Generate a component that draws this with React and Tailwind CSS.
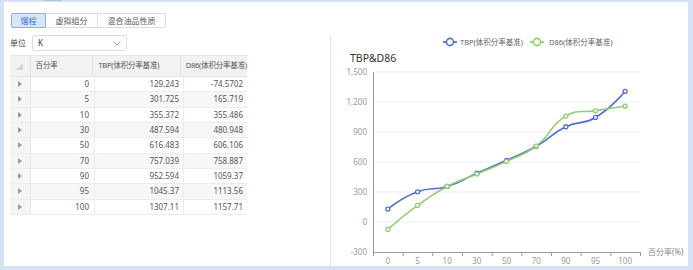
import React from "react";

const rows = [
  ["0", "129.243", "-74.5702"],
  ["5", "301.725", "165.719"],
  ["10", "355.372", "355.486"],
  ["30", "487.594", "480.948"],
  ["50", "616.483", "606.106"],
  ["70", "757.039", "758.887"],
  ["90", "952.594", "1059.37"],
  ["95", "1045.37", "1113.56"],
  ["100", "1307.11", "1157.71"],
];

const cats = ["0", "5", "10", "30", "50", "70", "90", "95", "100"];
const TBP = rows.map((r) => parseFloat(r[1]));
const D86 = rows.map((r) => parseFloat(r[2]));

const X0 = 373;
const X1 = 640;
const BW = (X1 - X0) / 9;
const xs = (i) => X0 + BW * (i + 0.5);
const ys = (v) => 222 - v / 10;

function smoothPath(vals) {
  const pts = vals.map((v, i) => [xs(i), ys(v)]);
  const s = 0.5;
  const cps = pts.map((p, i) => {
    if (i === 0 || i === pts.length - 1) return [p, p];
    const prev = pts[i - 1];
    const next = pts[i + 1];
    const vx = next[0] - prev[0];
    const vy = next[1] - prev[1];
    const d0 = Math.hypot(p[0] - prev[0], p[1] - prev[1]);
    const d1 = Math.hypot(next[0] - p[0], next[1] - p[1]);
    const sum = d0 + d1;
    const r0 = d0 / sum;
    const r1 = d1 / sum;
    return [
      [p[0] - vx * s * r0, p[1] - vy * s * r0],
      [p[0] + vx * s * r1, p[1] + vy * s * r1],
    ];
  });
  let d = `M${pts[0][0]},${pts[0][1]}`;
  for (let i = 1; i < pts.length; i++) {
    const c1 = cps[i - 1][1];
    const c2 = cps[i][0];
    d += ` C${c1[0]},${c1[1]} ${c2[0]},${c2[1]} ${pts[i][0]},${pts[i][1]}`;
  }
  return d;
}

const FONT = "'Noto Sans', 'Noto Sans CJK SC', sans-serif";

function Chart() {
  const yTicks = [1500, 1200, 900, 600, 300, 0, -300];
  const fmt = (v) => (Math.abs(v) >= 1000 ? v.toLocaleString("en-US") : String(v));
  return (
    <svg width="357" height="231" className="block" style={{ fontFamily: FONT }}>
      <g transform="translate(-331,-35)">
        {/* legend */}
        <line x1="443" y1="42" x2="457" y2="42" stroke="#5470c6" strokeWidth="1.8" />
        <circle cx="450" cy="42" r="3.6" fill="#fff" stroke="#5470c6" strokeWidth="1.6" />
        <text x="460" y="44.8" fontSize="7.5" fill="#666">TBP(体积分率基准)</text>
        <line x1="530" y1="42" x2="544" y2="42" stroke="#91cc75" strokeWidth="1.8" />
        <circle cx="537" cy="42" r="3.6" fill="#fff" stroke="#91cc75" strokeWidth="1.6" />
        <text x="549" y="44.8" fontSize="7.5" fill="#666">D86(体积分率基准)</text>

        {/* title */}
        <text x="350" y="62" fontSize="10.5" fill="#333">TBP&amp;D86</text>

        {/* grid */}
        {yTicks.slice(0, 6).map((v) => (
          <line key={v} x1={X0} y1={ys(v)} x2={X1} y2={ys(v)} stroke="#e9eef7" strokeWidth="1" />
        ))}
        {yTicks.map((v) => (
          <text key={"l" + v} x="367" y={ys(v) + 3} fontSize="8" fill="#9a9a9a" textAnchor="end">
            {fmt(v)}
          </text>
        ))}
        {/* axes */}
        <line x1={X0 + 0.5} y1="72" x2={X0 + 0.5} y2="252" stroke="#999" strokeWidth="1" />
        <line x1={X0} y1="252.5" x2={X1} y2="252.5" stroke="#999" strokeWidth="1" />
        {Array.from({ length: 10 }).map((_, i) => (
          <line
            key={"t" + i}
            x1={X0 + BW * i + 0.5}
            y1="252"
            x2={X0 + BW * i + 0.5}
            y2="256"
            stroke="#999"
            strokeWidth="1"
          />
        ))}
        {cats.map((c, i) => (
          <text key={"c" + c} x={xs(i)} y="264" fontSize="8" fill="#9a9a9a" textAnchor="middle">
            {c}
          </text>
        ))}
        <text x="648" y="255" fontSize="8" fill="#888">百分率(%)</text>

        {/* series */}
        <path d={smoothPath(TBP)} fill="none" stroke="#5470c6" strokeWidth="1.6" />
        <path d={smoothPath(D86)} fill="none" stroke="#91cc75" strokeWidth="1.6" />
        {TBP.map((v, i) => (
          <circle key={"b" + i} cx={xs(i)} cy={ys(v)} r="2" fill="#fff" stroke="#5470c6" strokeWidth="1.3" />
        ))}
        {D86.map((v, i) => (
          <circle key={"g" + i} cx={xs(i)} cy={ys(v)} r="2" fill="#fff" stroke="#91cc75" strokeWidth="1.3" />
        ))}
      </g>
    </svg>
  );
}

export default function App() {
  return (
    <div
      className="relative w-[693px] h-[270px] bg-[#d5e2f5] pt-[2px] pl-[4px] pr-[5px] pb-[4px] overflow-hidden"
      style={{ fontFamily: FONT }}
    >
      <div className="absolute left-[43px] top-0 w-[19px] h-[1px] bg-[#b2c6ea]" />
      <div className="flex w-[684px] h-[264px] bg-white">
        {/* left */}
        <div className="w-[326px] pl-[6px] pt-[11px] flex flex-col">
          <div className="flex ml-[1px] h-[15px] text-[8px] leading-none whitespace-nowrap">
            <div className="w-[35px] flex items-center justify-center bg-[#d9e5f8] border border-[#8fb0e6] text-[#3d6fd1] rounded-l-[2px]">
              馏程
            </div>
            <div className="w-[52px] flex items-center justify-center border-y border-r border-[#dcdcdc] text-[#555]">
              虚拟组分
            </div>
            <div className="w-[68px] flex items-center justify-center border-y border-r border-[#dcdcdc] text-[#555] rounded-r-[2px]">
              混合油品性质
            </div>
          </div>

          <div className="flex items-center mt-[7px] h-[16px]">
            <span className="w-[22px] text-[8px] text-[#444]">单位</span>
            <div className="w-[95px] h-[16px] border border-[#dddddd] rounded-[2px] flex items-center justify-between px-[5px]">
              <span className="text-[8px] text-[#333]">K</span>
              <svg width="8" height="5" viewBox="0 0 8 5">
                <path d="M0.5 0.5 L4 4 L7.5 0.5" fill="none" stroke="#999" strokeWidth="0.9" />
              </svg>
            </div>
          </div>

          {/* table */}
          <div className="mt-[4px] w-[237px] border-t border-[#e6e6e6] text-[8px] text-[#555] whitespace-nowrap">
            <div className="flex h-[21px] bg-[#f2f2f2] border-b border-[#e3e3e3] text-[7.5px] tracking-[-0.2px]">
              <div className="w-[21px] flex items-center justify-center border-r border-[#e3e3e3]">
                <svg width="7" height="7" viewBox="0 0 7 7">
                  <path d="M7 0 L7 7 L0 7 Z" fill="#d4d4d4" />
                </svg>
              </div>
              <div className="w-[64px] flex items-center pl-[5px] border-r border-[#e3e3e3]">百分率</div>
              <div className="w-[89px] flex items-center pl-[5px] border-r border-[#e3e3e3]">TBP(体积分率基准)</div>
              <div className="flex-1 flex items-center pl-[5px]">D86(体积分率基准)</div>
            </div>
            {rows.map((r, i) => (
              <div
                key={r[0]}
                className={`flex h-[15.33px] border-b border-[#ececec] ${i % 2 === 1 ? "bg-[#f7f7f7]" : "bg-white"}`}
              >
                <div className="w-[21px] flex items-center justify-center bg-[#f5f5f5] border-r border-[#e6e6e6]">
                  <svg width="4" height="6" viewBox="0 0 4 6">
                    <path d="M0 0 L4 3 L0 6 Z" fill="#9a9a9a" />
                  </svg>
                </div>
                <div className="w-[64px] flex items-center justify-end pr-[5px] border-r border-[#ececec]">{r[0]}</div>
                <div className="w-[89px] flex items-center justify-end pr-[4px] border-r border-[#ececec]">{r[1]}</div>
                <div className="flex-1 flex items-center justify-end pr-[4px]">{r[2]}</div>
              </div>
            ))}
          </div>
        </div>

        {/* right */}
        <div className="mt-[33px] flex-1 border-l border-[#e4e4e4] overflow-hidden">
          <Chart />
        </div>
      </div>
    </div>
  );
}
